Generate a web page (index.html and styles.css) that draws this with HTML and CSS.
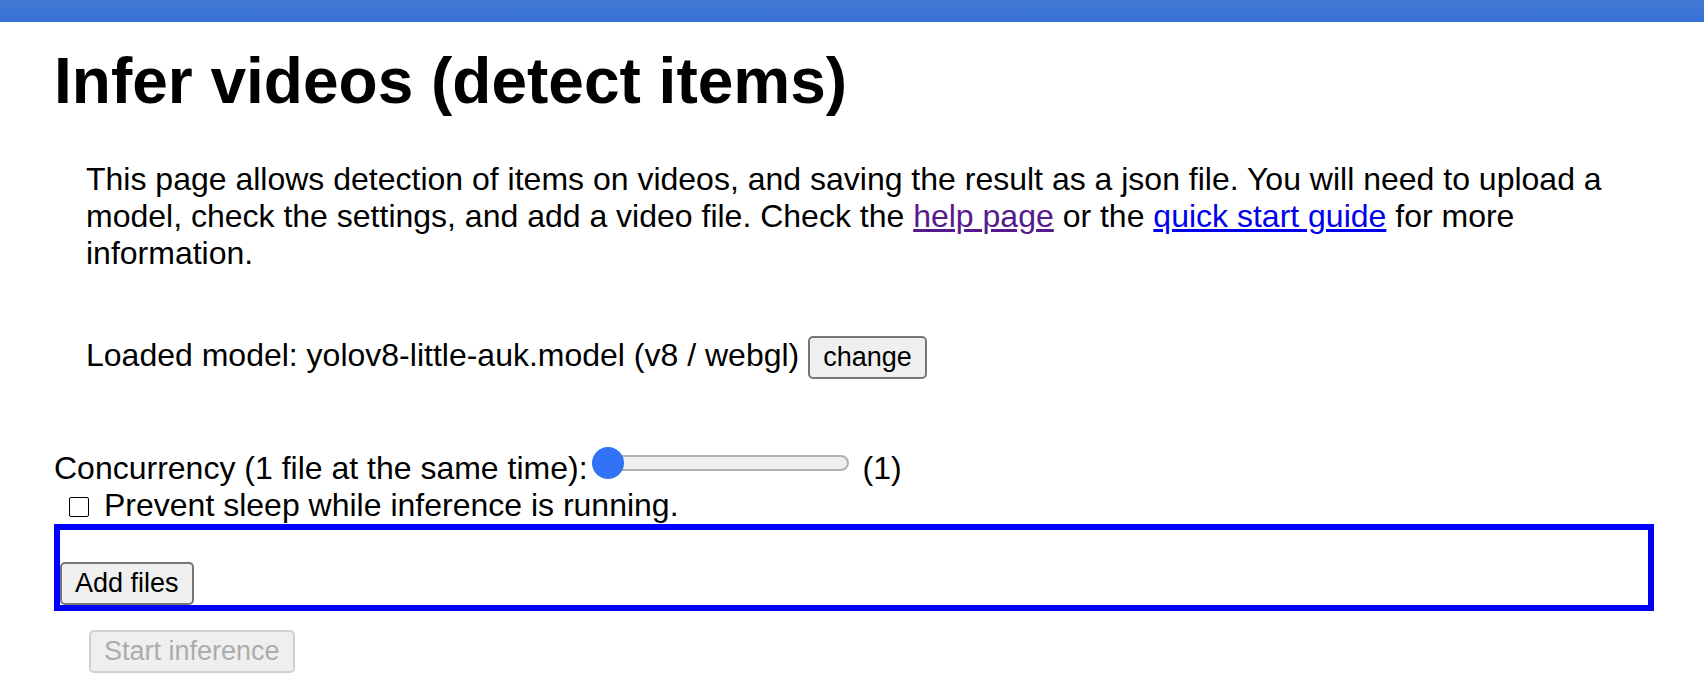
FILE: index.html
```html
<!DOCTYPE html>
<html lang="en">
<head>
<meta charset="utf-8">
<title>Infer videos</title>
<link rel="stylesheet" href="styles.css">
</head>
<body>
<header class="topbar"></header>
<main class="page">
  <h1 class="title">Infer videos (detect items)</h1>
  <p class="intro">This page allows detection of items on videos, and saving the result as a json file. You will need to upload a model, check the settings, and add a video file. Check the <a class="link visited" href="#help">help page</a> or the <a class="link" href="#guide">quick start guide</a> for more information.</p>
  <div class="model">
    <span>Loaded model: yolov8-little-auk.model (v8 / webgl)</span>
    <button class="button" type="button">change</button>
  </div>
  <div class="concurrency">
    <label for="concurrency">Concurrency (1 file at the same time):</label>
    <input class="slider" id="concurrency" type="range" min="1" max="10" value="1">
    <output class="count" for="concurrency">(1)</output>
  </div>
  <div class="option">
    <input class="checkbox" id="awake" type="checkbox">
    <label for="awake">Prevent sleep while inference is running.</label>
  </div>
  <section class="dropzone">
    <button class="button" type="button">Add files</button>
  </section>
  <div class="actions">
    <button class="button" type="button" disabled>Start inference</button>
  </div>
</main>
</body>
</html>
```

FILE: styles.css
```css
* {
  box-sizing: border-box;
}

body {
  margin: 0;
  background: #fff;
  color: #000;
  font: 32px/37px "Liberation Sans", Arial, sans-serif;
}

.topbar {
  height: 22px;
  background: linear-gradient(#447ad5, #3671d5);
}

.page {
  padding: 22px 50px 24px 54px;
}

.title {
  margin: 0;
  font-size: 64px;
  line-height: 74px;
}

.intro {
  margin: 43px 32px 64px;
}

.link {
  color: #0000ee;
  text-decoration-thickness: 3px;
  text-underline-offset: 2px;
}

.visited {
  color: #551a8b;
}

.model {
  display: flex;
  align-items: baseline;
  gap: 9px;
  margin: 0 32px 71px;
}

.button {
  height: 43px;
  padding: 0 13px;
  border: 2px solid #767676;
  border-radius: 5px;
  background: #efefef;
  color: #000;
  font-family: inherit;
  font-size: 27px;
  line-height: 31px;
}

.button:disabled {
  border-color: #d0d0d0;
  color: #acacac;
}

.concurrency {
  display: flex;
}

.slider {
  appearance: none;
  width: 257px;
  height: 32px;
  margin: -3px 14px 0 4px;
  background: transparent;
}

.slider::-webkit-slider-runnable-track {
  height: 16px;
  border: 2px solid #b2b2b2;
  border-radius: 8px;
  background: #efefef;
}

.slider::-webkit-slider-thumb {
  appearance: none;
  width: 32px;
  height: 32px;
  margin: -10px 0 0 -2px;
  border-radius: 50%;
  background: #3273f6;
}

.option {
  display: flex;
  align-items: center;
  gap: 15px;
  padding-left: 15px;
}

.checkbox {
  appearance: none;
  width: 20px;
  height: 20px;
  margin: 3px 0 0;
  border: 1px solid #000;
  border-radius: 2px;
}

.checkbox:checked {
  background: #3273f6;
}

.dropzone {
  display: flex;
  padding-top: 32px;
  border: 6px solid #00f;
}

.actions {
  display: flex;
  padding: 19px 35px;
}
```
